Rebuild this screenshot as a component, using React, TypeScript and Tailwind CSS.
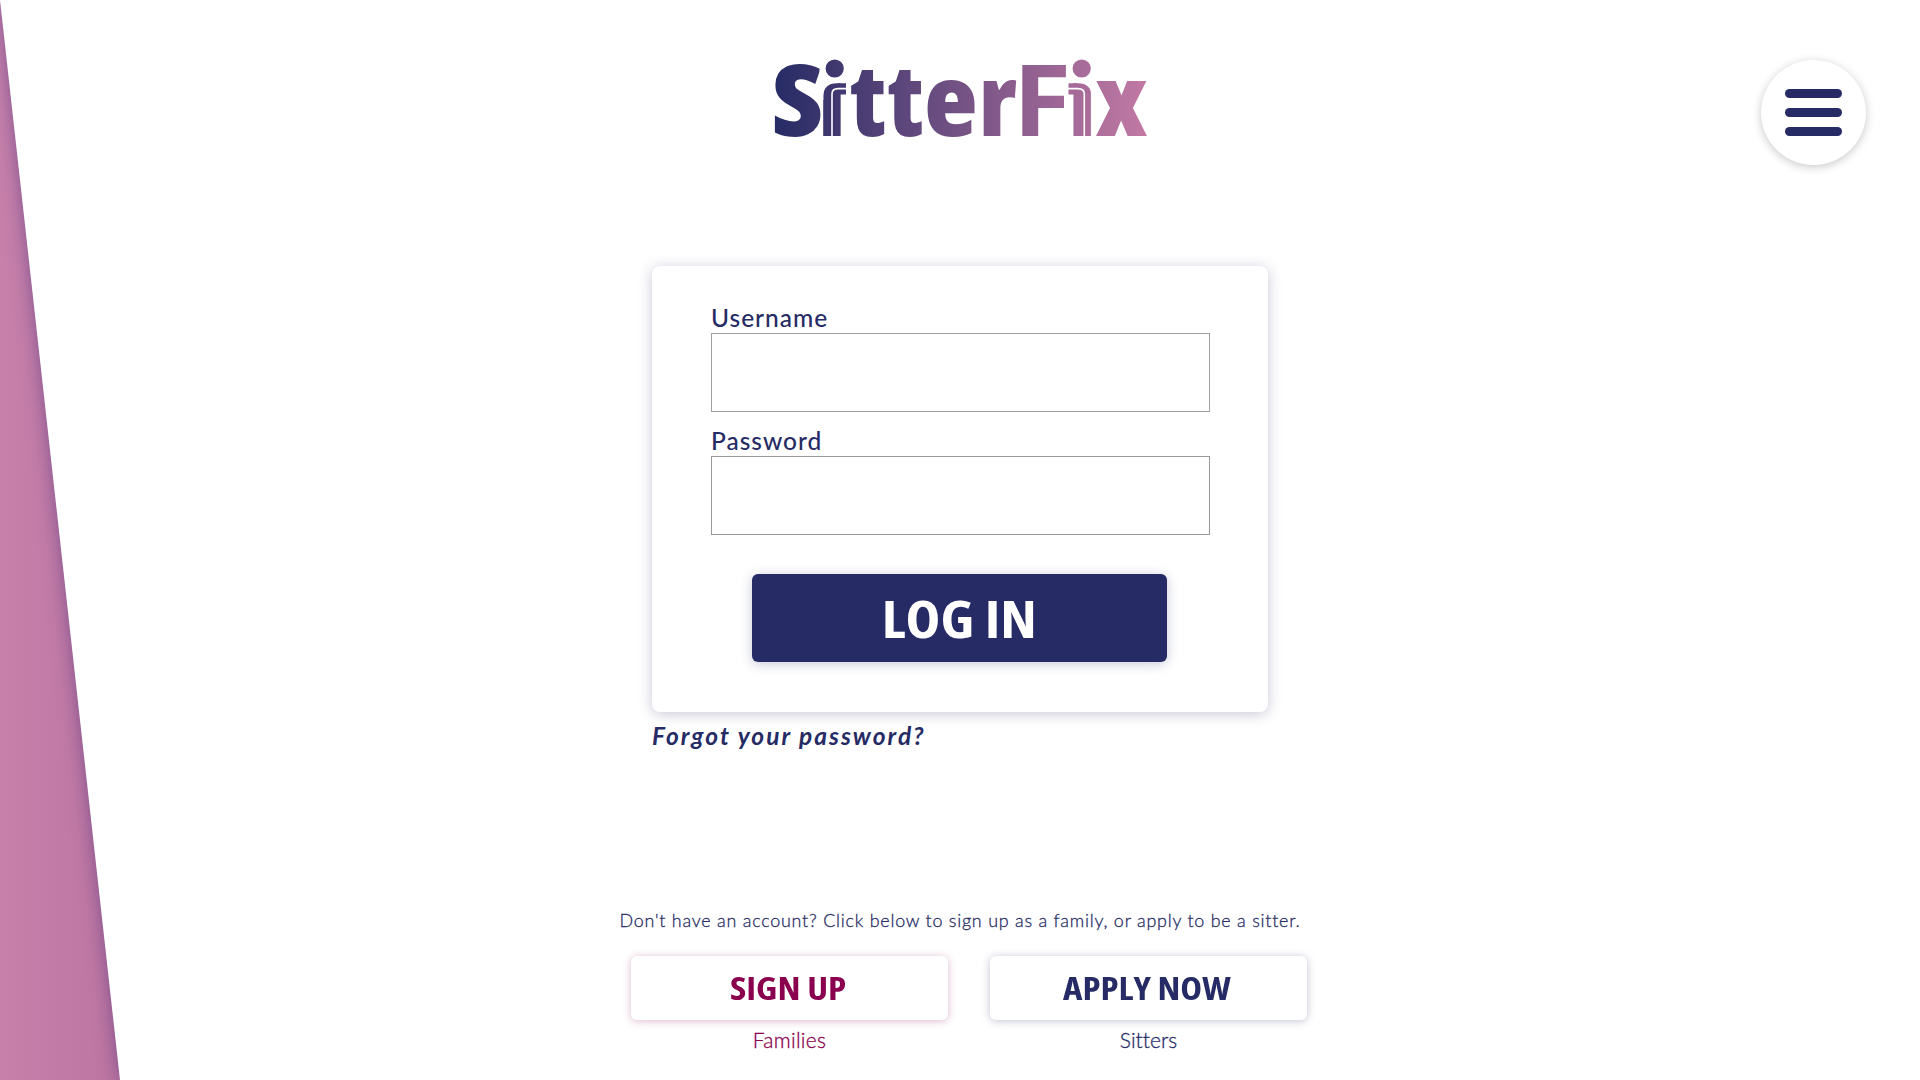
function Logo() {
  return (
    <svg className="block h-[86px] w-[380px] overflow-visible" viewBox="770 55 380 86" role="img" aria-label="SitterFix">
      <defs>
        <linearGradient id="brand" gradientUnits="userSpaceOnUse" x1="774" y1="0" x2="1147" y2="0">
          <stop offset="0" stopColor="#262b65" />
          <stop offset="1" stopColor="#c279a4" />
        </linearGradient>
        <clipPath id="stems">
          <path d="M760 45H819.5V100H823.3V97Q823.3 83.3 837 83.3H848V45H1067V83.3H1078Q1091.5 83.3 1091.5 97V100H1094V45H1160V151H760Z" />
        </clipPath>
      </defs>
      <g fill="url(#brand)">
        <g clipPath="url(#stems)">
          <text y="135.8" fontSize="98.4" className="font-['Open_Sans',sans-serif] font-extrabold [font-stretch:75%]">
            <tspan x="771.7" textLength="51.5" lengthAdjust="spacingAndGlyphs">S</tspan>
            <tspan x="817.8" textLength="28.5" lengthAdjust="spacingAndGlyphs">i</tspan>
            <tspan x="850.5" textLength="35.5" lengthAdjust="spacingAndGlyphs">t</tspan>
            <tspan x="888" textLength="35.5" lengthAdjust="spacingAndGlyphs">t</tspan>
            <tspan x="924" textLength="53.5" lengthAdjust="spacingAndGlyphs">e</tspan>
            <tspan x="978.5" textLength="38.5" lengthAdjust="spacingAndGlyphs">r</tspan>
            <tspan x="1012.7" textLength="58.5" lengthAdjust="spacingAndGlyphs" className="font-bold [font-stretch:100%]">F</tspan>
            <tspan x="1068" textLength="28.5" lengthAdjust="spacingAndGlyphs">i</tspan>
            <tspan x="1095.5" textLength="52" lengthAdjust="spacingAndGlyphs">x</tspan>
          </text>
        </g>
        <circle cx="834.7" cy="68.5" r="9.1" />
        <circle cx="1081.7" cy="68.5" r="9.1" />
        <path d="M838 83.3H846V94.5H838ZM1068.5 83.3H1077V94.5H1068.5Z" />
      </g>
      <path
        d="M832 136V94Q832 88.6 838 88.6H847M1084.3 136V94Q1084.3 88.6 1078 88.6H1067.5"
        fill="none"
        stroke="#fff"
        strokeWidth="1.6"
      />
    </svg>
  );
}

function MenuButton() {
  return (
    <button
      aria-label="Menu"
      className="absolute top-[60px] right-[54px] flex size-[105px] flex-col items-center justify-center gap-[10.7px] rounded-full bg-white shadow-[0_2px_10px_rgba(0,0,0,0.22)]"
    >
      <span className="h-[8.5px] w-[57px] rounded-full bg-[#262b65]" />
      <span className="h-[8.5px] w-[57px] rounded-full bg-[#262b65]" />
      <span className="h-[8.5px] w-[57px] rounded-full bg-[#262b65]" />
    </button>
  );
}

export default function App() {
  return (
    <div className="relative h-[1080px] w-full overflow-hidden bg-white font-['Lato',sans-serif] text-[#262b65] [font-variant-ligatures:none]">
      <div className="absolute inset-y-0 left-0 w-[140px] bg-linear-to-r from-[#c680aa] to-[#bb739f]" />
      <div className="absolute inset-0 drop-shadow-[0_0_9px_rgba(60,40,120,0.5)]">
        <div className="size-full bg-white [clip-path:polygon(0_0,100%_0,100%_100%,120px_100%)]" />
      </div>

      <main className="relative flex flex-col items-center pt-[55px]">
        <Logo />
        <form className="mt-[125px] flex h-[446px] w-[616px] flex-col rounded-lg bg-white px-[59px] pt-[36px] shadow-[0_2px_14px_rgba(37,42,99,0.26)]">
          <label className="h-[31px] text-[24.5px] leading-[32px] font-medium tracking-[1px]">Username</label>
          <input className="h-[79px] w-[499px] border border-[#a0a0a0] bg-white" />
          <label className="mt-[13px] h-[31px] text-[24.5px] leading-[32px] font-medium tracking-[1px]">Password</label>
          <input type="password" className="h-[79px] w-[499px] border border-[#999] bg-white" />
          <button
            type="button"
            className="mt-[39px] ml-[41px] h-[88px] w-[415px] rounded-md bg-[#262b65] text-[52.5px] leading-[88px] font-bold text-white shadow-[0_2px_12px_rgba(37,42,99,0.25)]"
          >
            <span className="inline-block scale-x-[1.12] font-['Open_Sans',sans-serif] [font-stretch:75%]">LOG IN</span>
          </button>
        </form>
        <a className="mt-[8px] w-[616px] text-[24.5px] leading-[32px] font-bold tracking-[2px] italic">Forgot your password?</a>

        <p className="mt-[156px] text-[17.9px] leading-[24px] font-light tracking-[0.78px] [-webkit-text-stroke:0.3px_#262b65]">
          Don't have an account? Click below to sign up as a family, or apply to be a sitter.
        </p>
        <div className="mt-[24px] ml-[18px] flex gap-[42px] text-center">
          <div>
            <button className="block h-[64px] w-[317px] rounded-md bg-white pr-[3px] text-[32px] leading-[64px] font-bold text-[#8a004f] shadow-[0_1px_8px_rgba(138,0,79,0.28)]">
              <span className="inline-block scale-x-[1.16] font-['Open_Sans',sans-serif] [font-stretch:75%]">SIGN UP</span>
            </button>
            <div className="mt-1 text-[21px] leading-[32px] font-light tracking-[0.3px] text-[#8a004f] [-webkit-text-stroke:0.3px_#8a004f]">Families</div>
          </div>
          <div>
            <button className="block h-[64px] w-[317px] rounded-md bg-white pr-[4px] text-[32px] leading-[64px] font-bold shadow-[0_1px_8px_rgba(37,42,99,0.28)]">
              <span className="inline-block scale-x-[1.15] font-['Open_Sans',sans-serif] [font-stretch:75%]">APPLY NOW</span>
            </button>
            <div className="mt-1 text-[21px] leading-[32px] font-light [-webkit-text-stroke:0.3px_#262b65]">Sitters</div>
          </div>
        </div>
      </main>
      <MenuButton />
    </div>
  );
}
